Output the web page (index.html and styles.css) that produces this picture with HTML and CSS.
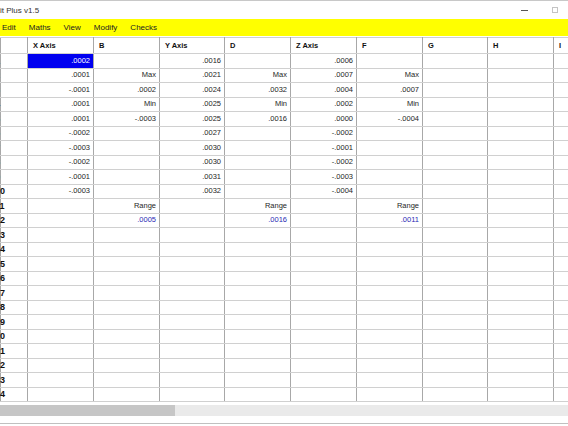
FILE: index.html
```html
<!DOCTYPE html>
<html lang="en">

<head>
    <meta charset="UTF-8">
    <title>Edit Plus v1.5</title>
    <link rel="stylesheet" href="styles.css">
</head>

<body>
    <div class="window">
        <div class="titlebar">
            <span class="title">it Plus v1.5</span>
            <span class="controls">
                <span class="btn-min"></span>
                <span class="btn-max"></span>
            </span>
        </div>

        <div class="menubar">
            <span>Edit</span>
            <span>Maths</span>
            <span>View</span>
            <span>Modify</span>
            <span>Checks</span>
        </div>

        <div class="grid">
            <table id="sheet">
                <colgroup>
                    <col class="c-rn">
                    <col class="c-w">
                    <col class="c-w">
                    <col class="c-n">
                    <col class="c-w">
                    <col class="c-w">
                    <col class="c-w">
                    <col class="c-n">
                    <col class="c-w">
                    <col class="c-w">
                </colgroup>
                <thead>
                    <tr class="head">
                        <th></th>
                        <th>X Axis</th>
                        <th>B</th>
                        <th>Y Axis</th>
                        <th>D</th>
                        <th>Z Axis</th>
                        <th>F</th>
                        <th>G</th>
                        <th>H</th>
                        <th>I</th>
                    </tr>
                </thead>
                <tbody id="rows"></tbody>
            </table>
        </div>

        <div class="hscroll">
            <div class="thumb"></div>
        </div>
        <div class="status"></div>
    </div>

    <script>
        const data = [
            ['.0002', '', '.0016', '', '.0006', ''],
            ['.0001', 'Max', '.0021', 'Max', '.0007', 'Max'],
            ['-.0001', '.0002', '.0024', '.0032', '.0004', '.0007'],
            ['.0001', 'Min', '.0025', 'Min', '.0002', 'Min'],
            ['.0001', '-.0003', '.0025', '.0016', '.0000', '-.0004'],
            ['-.0002', '', '.0027', '', '-.0002', ''],
            ['-.0003', '', '.0030', '', '-.0001', ''],
            ['-.0002', '', '.0030', '', '-.0002', ''],
            ['-.0001', '', '.0031', '', '-.0003', ''],
            ['-.0003', '', '.0032', '', '-.0004', ''],
            ['', 'Range', '', 'Range', '', 'Range'],
            ['', '.0005', '', '.0016', '', '.0011']
        ];

        const tbody = document.getElementById('rows');

        for (let r = 0; r < 24; r++) {
            const tr = document.createElement('tr');
            const rn = document.createElement('th');
            rn.className = 'rn';
            rn.innerText = r + 1;
            tr.appendChild(rn);

            const values = data[r] || [];
            for (let c = 0; c < 9; c++) {
                const td = document.createElement('td');
                td.innerText = values[c] || '';
                if (r == 0 && c == 0) td.className = 'sel';
                if (r == 11) td.className = 'range';
                tr.appendChild(td);
            }
            tbody.appendChild(tr);
        }
    </script>
</body>

</html>
```

FILE: styles.css
```css
body {
    margin: 0;
    font-family: "Liberation Sans", Arial, Helvetica, sans-serif;
    color: #1e1e1e;
}

.window {
    width: 568px;
    height: 426px;
    overflow: hidden;
    background: #fff;
    border-top: 1px solid #c8c8c8;
    box-sizing: border-box;
    display: flex;
    flex-direction: column;
}

.titlebar {
    height: 18px;
    flex: none;
    display: flex;
    align-items: center;
    justify-content: space-between;
    font-size: 8px;
    color: #333;
}

.controls {
    display: flex;
    align-items: center;
    gap: 24px;
    margin-right: 10px;
}

.btn-min {
    width: 7px;
    height: 1px;
    background: #555;
}

.btn-max {
    width: 4px;
    height: 4px;
    border: 1px solid #c4c4c4;
}

.menubar {
    height: 17px;
    flex: none;
    background: #ffff00;
    display: flex;
    align-items: center;
    gap: 13px;
    padding-left: 2px;
    font-size: 8px;
    color: #222;
}

.grid {
    flex: none;
    height: 366px;
    margin-top: 1px;
    overflow: hidden;
}

table {
    border-collapse: collapse;
    table-layout: fixed;
    width: 620px;
}

.c-rn {
    width: 27px;
}

.c-w {
    width: 66px;
}

.c-n {
    width: 65px;
}

th,
td {
    padding: 0 3px;
    overflow: hidden;
    white-space: nowrap;
    font-size: 7.5px;
    border-top: 1px solid #d0d0d0;
    border-bottom: 1px solid #d0d0d0;
    border-left: 1px solid #a8a8a8;
    border-right: 1px solid #a8a8a8;
}

tr.head th {
    height: 15px;
    text-align: left;
    padding-left: 5px;
    font-weight: bold;
    font-size: 7.5px;
    color: #111;
}

tbody tr {
    height: 14.5px;
}

td {
    text-align: right;
    line-height: 12px;
}

th.rn {
    text-align: left;
    padding: 0;
    text-indent: -6px;
    font-size: 9px;
    font-weight: bold;
    color: #111;
    overflow: visible;
}

td.sel {
    background: #0000f0;
    color: #fff;
}

td.range {
    color: #2a2ab4;
}

.hscroll {
    flex: none;
    height: 11px;
    margin-top: 2px;
    background: #eaeaea;
}

.thumb {
    width: 175px;
    height: 100%;
    background: #c6c6c6;
}

.status {
    flex: none;
    height: 7px;
    border-bottom: 1px solid #c0c0c0;
}
```
